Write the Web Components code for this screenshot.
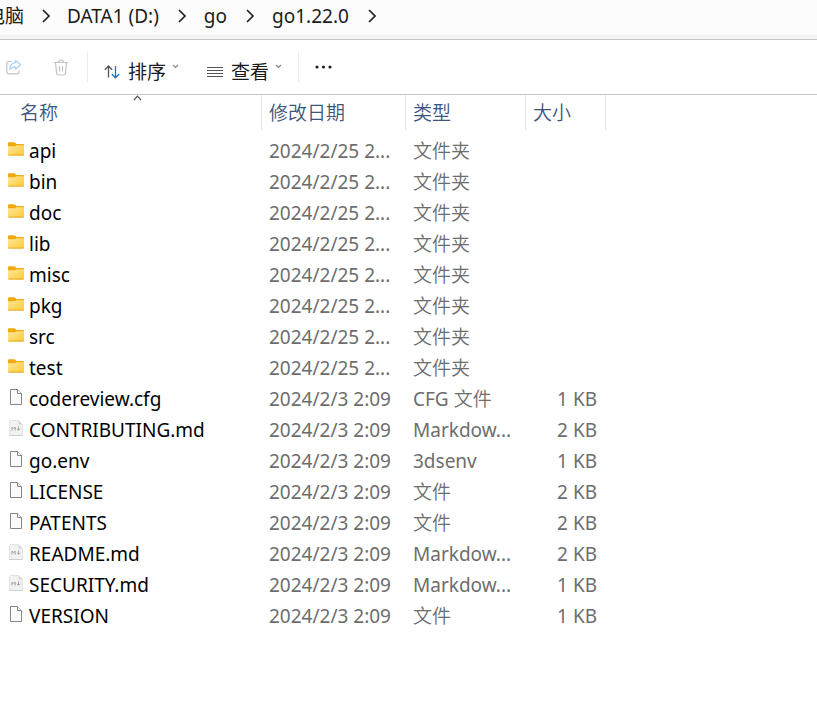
<!DOCTYPE html>
<html lang="zh-CN">
<head>
<meta charset="utf-8">
<title>go1.22.0</title>
<style>
body{margin:0;background:#fff;color:#1b1b1b;font-family:"Noto Sans","Noto Sans CJK SC",sans-serif;font-size:19px}
</style>
</head>
<body>
<file-explorer></file-explorer>
<script>
const define = (name, html, setup) => customElements.define(name, class extends HTMLElement {
  connectedCallback() {
    if (this.shadowRoot) return;
    const t = document.createElement('template');
    t.innerHTML = html;
    this.attachShadow({mode: 'open'}).append(t.content.cloneNode(true));
    if (setup) setup(this, this.shadowRoot);
  }
});

const icons = {
  folder: `<svg width="16" height="14" viewBox="0 0 16 14"><defs><linearGradient id="g" x1="0" y1="0" x2="1" y2="1"><stop offset="0" stop-color="#ffe79a"/><stop offset="1" stop-color="#fdc936"/></linearGradient></defs><path d="M0 1.2Q0 .2 1 .2H6.2Q6.8 .2 7.2 .7L8.6 2H15Q16 2 16 3V8H0Z" fill="#f0a90f"/><path d="M0 4.3H6.4Q7 4.3 7.4 3.9L8.2 3.2H15.2Q16 3.2 16 4V12.4Q16 13.5 15 13.5H1Q0 13.5 0 12.4Z" fill="url(#g)"/><path d="M.4 13.1H15.6" stroke="#e9a51c" stroke-width=".9"/></svg>`,
  file: `<svg width="16" height="17" viewBox="0 0 16 17" fill="#fafafa" stroke="#858585"><path d="M2.5.5H9.5L13.5 4.5V15.5H2.5Z"/><path d="M9.5.5V4.5H13.5" fill="#fff"/></svg>`,
  md: `<svg width="16" height="17" viewBox="0 0 16 17"><path d="M1.5 1.5Q1.5.5 2.5.5H10.5L14.5 4.5V14.5Q14.5 15.5 13.5 15.5H2.5Q1.5 15.5 1.5 14.5Z" fill="#f2f2f2" stroke="#e3e3e3"/><path d="M10.5.5V4.5H14.5Z" fill="#d6d6d6"/><path d="M1.5 15.5H14.5" stroke="#cfcfcf"/><path d="M4 10.5V7L5.6 8.8L7.2 7V10.5M10.5 6.5V10M9 8.8L10.5 10.4L12 8.8" fill="none" stroke="#a2a2a2"/></svg>`,
  chevron: `<svg width="9" height="14" viewBox="0 0 9 14" fill="none" stroke="#222" stroke-width="1.7"><path d="M1 1L7 7L1 13"/></svg>`,
  down: `<svg width="7" height="5" viewBox="0 0 7 5" fill="none" stroke="#888" stroke-width="1.2"><path d="M1 1L3.5 3.5L6 1"/></svg>`,
  up: `<svg width="9" height="6" viewBox="0 0 9 6" fill="none" stroke="#555" stroke-width="1.2"><path d="M1 5L4.5 1.2L8 5"/></svg>`,
  share: `<svg width="16" height="16" viewBox="0 0 16 16" fill="none" stroke-linejoin="round"><path d="M6 2.5H3Q.8 2.5 .8 4.7V12.8Q.8 14.8 3 14.8H11Q13.2 14.8 13.2 12.8V11.5" stroke="#c4c4c4" stroke-width="1.2"/><path d="M9.5 1.2L14.5 5.7L9.5 10.2V7.8Q5.8 7.7 3.7 10.5Q4 4.3 9.5 3.7Z" stroke="#a9d3f2" stroke-width="1.2"/></svg>`,
  trash: `<svg width="16" height="17" viewBox="0 0 16 17" fill="none" stroke="#c2c2c2" stroke-width="1.2"><path d="M1 3.5H15M5.7 3.5Q5.7 1 8 1Q10.3 1 10.3 3.5M2.5 3.5L3.6 14.2Q3.8 16 5.5 16H10.5Q12.2 16 12.4 14.2L13.5 3.5M6.5 7V12.5M9.5 7V12.5"/></svg>`,
  sort: `<svg width="16" height="14" viewBox="0 0 16 14" fill="none" stroke-width="1.3"><path d="M4.5 12.5V1.2M.8 4.8L4.5 1L8.2 4.8" stroke="#555"/><path d="M11.5 1V12.6M7.8 9L11.5 12.8L15.2 9" stroke="#1879cf"/></svg>`,
  view: `<svg width="16" height="12" viewBox="0 0 16 12" stroke="#555"><path d="M0 1.5H16M0 4.5H16M0 7.5H16M0 10.5H16"/></svg>`,
  more: `<svg width="17" height="4" viewBox="0 0 17 4" fill="#222"><circle cx="2" cy="2" r="1.6"/><circle cx="8.5" cy="2" r="1.6"/><circle cx="15" cy="2" r="1.6"/></svg>`
};
define('ui-icon', `<style>:host{display:inline-flex;flex:none}svg{display:block}</style>`,
  (el, root) => root.firstElementChild.insertAdjacentHTML('afterend', icons[el.getAttribute('name')]));

define('path-crumb', `<style>
:host{display:flex;align-items:center}
a{color:inherit;text-decoration:none;white-space:nowrap;line-height:28px}
ui-icon{margin:0 17px 0 19px}
:host([clipped]) a{display:flex;justify-content:flex-end;width:24px;overflow:hidden}
:host([clipped]) ui-icon{margin:0 16px 0 18px}
</style><a href="#"><slot></slot></a><ui-icon name="chevron"></ui-icon>`);

define('path-bar', `<style>
:host{display:block;background:#fcfcfc;border-bottom:1px solid #c8c8c8}
nav{display:flex;align-items:center;height:32px;padding-bottom:3px;border-bottom:4px solid #f3f3f3;overflow:hidden}
</style><nav aria-label="路径"><slot></slot></nav>`);

define('tool-button', `<style>
:host{display:flex}
button{display:flex;align-items:center;border:0;padding:0;background:none;color:inherit;font:inherit;line-height:28px;white-space:nowrap}
.text{display:flex;align-items:center;gap:8px;padding-top:9px}
.down{margin:0 0 1px 6px}
</style><button type="button"></button>`, (el, root) => {
  const label = el.getAttribute('label'), icon = `<ui-icon name="${el.getAttribute('icon')}"></ui-icon>`;
  const b = root.querySelector('button');
  if (el.hasAttribute('menu')) b.innerHTML = `<span class="text">${icon}<span>${label}</span></span><ui-icon class="down" name="down"></ui-icon>`;
  else { b.innerHTML = icon; b.setAttribute('aria-label', label); b.disabled = el.hasAttribute('disabled'); }
});

define('tool-bar', `<style>
:host{display:flex;align-items:center;height:54px;padding-left:6px;border-bottom:1px solid #c8c8c8}
</style><slot></slot>`);

const folders = ['api','bin','doc','lib','misc','pkg','src','test'].map(n => ['folder', n, '2024/2/25 2...', '文件夹', '']);
const files = [
  ['file','codereview.cfg','CFG 文件',1],['md','CONTRIBUTING.md','Markdow...',2],['file','go.env','3dsenv',1],
  ['file','LICENSE','文件',2],['file','PATENTS','文件',2],['md','README.md','Markdow...',2],
  ['md','SECURITY.md','Markdow...',1],['file','VERSION','文件',1]
].map(([i, n, t, s]) => [i, n, '2024/2/3 2:09', t, s + ' KB']);

define('file-list', `<style>
:host{display:block}
table{border-collapse:separate;border-spacing:0;table-layout:fixed;width:100%;line-height:28px;color:#6d6d6d}
.name-col{width:262px}.date-col{width:144px}.type-col{width:120px}.size-col{width:80px}
th{position:relative;box-sizing:border-box;height:35px;padding:0 0 0 7px;border-right:1px solid #e5e5e5;font-weight:350;text-align:left;color:#3c557d}
th:first-child{padding-left:20px}
th:last-child{border:0}
th ui-icon{position:absolute;top:0;left:133px}
tbody::before{content:"";display:block;height:5px}
td{box-sizing:border-box;height:31px;padding:0 0 0 7px;white-space:nowrap;overflow:hidden}
td:first-child{padding-left:8px}
.cjk{font-weight:350}
td:nth-child(4){padding:0 9px 0 0;text-align:right}
.name{display:flex;align-items:center;gap:5px;color:#000}
.name ui-icon{padding-bottom:3px}
</style><table><colgroup><col class="name-col"><col class="date-col"><col class="type-col"><col class="size-col"><col></colgroup>
<thead><tr><th>名称<ui-icon name="up"></ui-icon></th><th>修改日期</th><th>类型</th><th>大小</th><th></th></tr></thead><tbody></tbody></table>`,
(el, root) => {
  root.querySelector('tbody').innerHTML = [...folders, ...files].map(([i, n, d, t, s]) =>
    `<tr><td><span class="name"><ui-icon name="${i}"></ui-icon><span>${n}</span></span></td><td>${d}</td><td>${t.replace(/[一-龥]+/, '<span class="cjk">$&</span>')}</td><td>${s}</td><td></td></tr>`).join('');
});

define('file-explorer', `<style>
:host{display:block}
hr{width:1px;height:30px;margin:0;border:0;background:#ebebeb}
.trash{margin-left:31px}
.first{margin:0 16px 0 18px}
.view{margin-left:28px}
.second{margin:0 16px}
</style>
<path-bar><path-crumb clipped>此电脑</path-crumb><path-crumb>DATA1 (D:)</path-crumb><path-crumb>go</path-crumb><path-crumb>go1.22.0</path-crumb></path-bar>
<tool-bar><tool-button icon="share" label="共享" disabled></tool-button><tool-button class="trash" icon="trash" label="删除" disabled></tool-button><hr class="first"><tool-button icon="sort" label="排序" menu></tool-button><tool-button class="view" icon="view" label="查看" menu></tool-button><hr class="second"><tool-button icon="more" label="查看更多"></tool-button></tool-bar>
<file-list></file-list>`);
</script>
</body>
</html>
